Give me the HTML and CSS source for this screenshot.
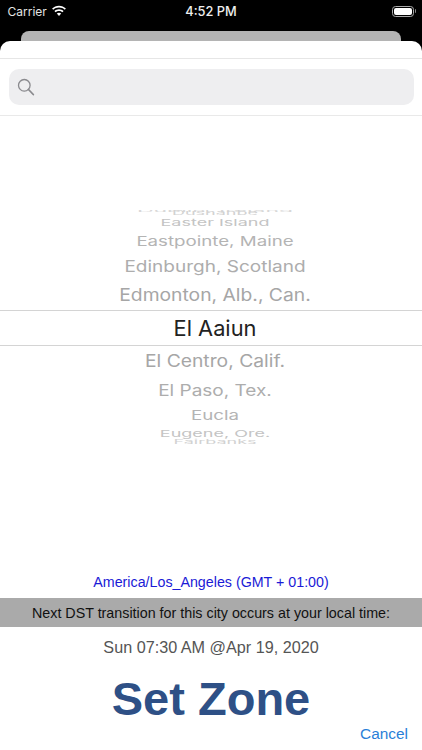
FILE: index.html
```html
<!DOCTYPE html>
<html lang="en">

<head>
    <meta charset="UTF-8" />
    <meta name="viewport" content="width=device-width, initial-scale=1.0" />
    <title>Set Zone</title>
    <link rel="stylesheet" href="styles.css">
</head>

<body>
    <div class="phone">
        <!-- status bar -->
        <div class="status-bar">
            <div class="status-left">
                <span class="carrier">Carrier</span>
                <svg class="wifi" width="16" height="12" viewBox="0 0 16 12">
                    <path d="M8 2.4c2.3 0 4.3.9 5.8 2.3l1.1-1.2C13.100 1.800 10.700.7 8 .7S2.900 1.800 1.100 3.500l1.100 1.200C3.700 3.300 5.700 2.400 8 2.400z" fill="#fff" />
                    <path d="M8 5.900c1.300 0 2.500.5 3.400 1.300l1.200-1.200C11.400 4.900 9.800 4.200 8 4.200s-3.400.7-4.600 1.800l1.200 1.200c.9-.8 2.100-1.300 3.400-1.300z" fill="#fff" />
                    <path d="M8 7.700c-.9 0-1.600.3-2.200.8L8 11l2.200-2.500c-.6-.5-1.300-.8-2.200-.8z" fill="#fff" />
                </svg>
            </div>
            <span class="clock">4:52 PM</span>
            <div class="battery">
                <div class="battery-body">
                    <div class="battery-level"></div>
                </div>
                <div class="battery-cap"></div>
            </div>
        </div>

        <div class="sheet-behind"></div>

        <div class="sheet">
            <div class="sheet-grabber"></div>
            <!-- search -->
            <div class="search-wrap">
                <div class="search-box">
                    <svg width="18" height="18" viewBox="0 0 18 18">
                        <circle cx="7.300" cy="7.300" r="5.800" fill="none" stroke="#8a8a8e" stroke-width="1.300" />
                        <path d="M11.500 11.500 L16.300 16.500" fill="none" stroke="#8a8a8e" stroke-width="1.800" stroke-linecap="round" />
                    </svg>
                </div>
            </div>

            <!-- city picker -->
            <div class="picker">
                <ul class="picker-list">
                    <li class="far-0">Dublin, Ireland</li>
                    <li class="far-1">Dushanbe</li>
                    <li class="far-2">Easter Island</li>
                    <li class="far-3">Eastpointe, Maine</li>
                    <li class="far-4">Edinburgh, Scotland</li>
                    <li class="far-5">Edmonton, Alb., Can.</li>
                    <li class="active">El Aaiun</li>
                    <li class="far-5">El Centro, Calif.</li>
                    <li class="far-4">El Paso, Tex.</li>
                    <li class="far-3">Eucla</li>
                    <li class="far-2">Eugene, Ore.</li>
                    <li class="far-1 last">Fairbanks</li>
                </ul>
            </div>

            <div class="zone-name">America/Los_Angeles (GMT + 01:00)</div>
            <div class="dst-band">Next DST transition for this city occurs at your local time:</div>
            <div class="dst-time">Sun 07:30 AM @Apr 19, 2020</div>
            <button class="set-zone">Set Zone</button>
            <div class="footer">
                <button class="cancel">Cancel</button>
            </div>
        </div>
    </div>
</body>

</html>
```

FILE: styles.css
```css
* {
    box-sizing: border-box;
}

body {
    margin: 0;
    background: #000;
    font-family: "Liberation Sans", Arial, sans-serif;
}

.phone {
    width: 422px;
    height: 750px;
    overflow: hidden;
    display: flex;
    flex-direction: column;
    background: #000;
}

.status-bar {
    height: 31px;
    flex: none;
    padding: 0 6px 9px 7.5px;
    display: flex;
    align-items: center;
    justify-content: space-between;
    position: relative;
    color: #fff;
}

.status-left {
    display: flex;
    align-items: center;
    gap: 4.500px;
}

.carrier {
    font-family: Inter, sans-serif;
    font-size: 12px;
    color: #e4e4e4;
}

.wifi {
    margin-top: -1px;
}

.clock {
    position: absolute;
    left: 0;
    right: 0;
    top: 3px;
    text-align: center;
    font-family: Inter, sans-serif;
    font-size: 12.800px;
    font-weight: 500;
    color: #eee;
    line-height: 17px;
}

.battery {
    display: flex;
    align-items: center;
    gap: 1px;
}

.battery-body {
    width: 22px;
    height: 11px;
    border: 1px solid #aaa;
    border-radius: 3.500px;
    padding: 1px;
}

.battery-level {
    height: 100%;
    background: #fff;
    border-radius: 2px;
}

.battery-cap {
    width: 1.500px;
    height: 4px;
    background: #888;
    border-radius: 0 1px 1px 0;
}

.sheet-behind {
    height: 10px;
    flex: none;
    margin: 0 21px;
    background: #b4b4b4;
    border-radius: 8px 8px 0 0;
}

.sheet {
    flex: 1;
    background: #fff;
    border-radius: 10px 10px 0 0;
    display: flex;
    flex-direction: column;
}

.sheet-grabber {
    height: 18px;
    flex: none;
    border-bottom: 1px solid #e6e6e6;
}

.search-wrap {
    height: 57px;
    flex: none;
    padding: 10px 8.500px;
    border-bottom: 1px solid #e9e9e9;
}

.search-box {
    height: 36px;
    background: #eeeef0;
    border-radius: 10px;
    display: flex;
    align-items: center;
    padding-left: 8px;
}

.picker {
    height: 450px;
    flex: none;
    padding-top: 94px;
}

.picker-list {
    margin: 0;
    padding: 0;
    list-style: none;
    height: 235px;
    overflow: hidden;
    font-family: Inter, sans-serif;
    text-align: center;
    color: #a6a6a6;
}

.picker-list li {
    display: flex;
    align-items: center;
    justify-content: center;
    white-space: nowrap;
    padding-left: 8px;
}

.picker-list .active {
    height: 36px;
    font-size: 21.800px;
    color: #222;
    border-top: 1px solid #d4d4d4;
    border-bottom: 1px solid #d4d4d4;
}

/* rows further from the middle get squashed like a wheel */
.far-5 {
    height: 30px;
    font-size: 19.300px;
    transform: scaleY(0.88);
}

.far-4 {
    height: 28px;
    font-size: 19px;
    transform: scaleY(0.82);
    color: #adadad;
}

.far-3 {
    height: 22px;
    font-size: 18.700px;
    transform: scaleY(0.71);
    color: #b4b4b4;
}

.far-2 {
    height: 15px;
    font-size: 18px;
    transform: scaleY(0.53);
    color: #c4c4c4;
}

.far-1 {
    height: 5px;
    font-size: 18px;
    transform: scaleY(0.33);
    color: #d2d2d2;
}

/* almost edge-on, sits under the next row */
.far-0 {
    height: 2px;
    margin-bottom: -2px;
    font-size: 23px;
    transform: scaleY(0.15);
    color: #d8d8d8;
}

.far-1.last {
    margin-top: -2px;
}

.zone-name {
    height: 32px;
    flex: none;
    display: flex;
    align-items: center;
    justify-content: center;
    font-size: 14.250px;
    color: #1a1ad6;
}

.dst-band {
    height: 29px;
    flex: none;
    display: flex;
    align-items: center;
    justify-content: center;
    background: #aaa;
    font-size: 14.300px;
    color: #111;
}

.dst-time {
    height: 41px;
    flex: none;
    display: flex;
    align-items: center;
    justify-content: center;
    font-size: 16.200px;
    color: #555;
}

.set-zone {
    height: 57px;
    flex: none;
    padding: 3px 0 0;
    border: none;
    background: none;
    font-family: "Liberation Sans", Arial, sans-serif;
    font-size: 47px;
    font-weight: bold;
    color: #2e5086;
}

.footer {
    display: flex;
    justify-content: flex-end;
    padding-right: 14px;
}

.cancel {
    padding: 0;
    border: none;
    background: none;
    font-family: "Liberation Sans", Arial, sans-serif;
    font-size: 15.400px;
    color: #2a7fd8;
}
```
